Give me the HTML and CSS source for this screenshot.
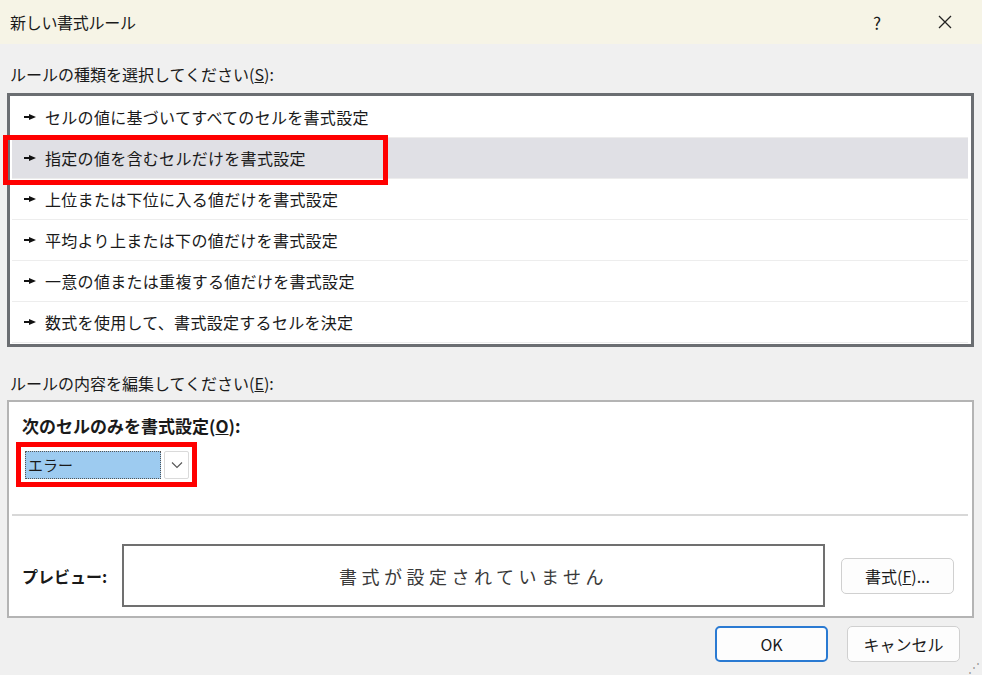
FILE: index.html
```html
<!DOCTYPE html>
<html lang="ja">
<head>
	<meta charset="UTF-8">
	<title>新しい書式ルール</title>
	<link rel="stylesheet" href="styles.css">
</head>
<body>
<div class="dialog">
	<!-- タイトルバー -->
	<div class="titlebar">
		<span class="title">新しい書式ルール</span>
		<span class="help">?</span>
		<span class="close">
			<svg width="16" height="16" viewBox="0 0 16 16"><path d="M2 2 L14 14 M14 2 L2 14" stroke="#222" stroke-width="1.3" fill="none"/></svg>
		</span>
	</div>

	<div class="content">
		<p class="label">ルールの種類を選択してください(<u>S</u>):</p>
		<div class="listbox">
			<div class="rule-row"><span class="arrow"></span>セルの値に基づいてすべてのセルを書式設定</div>
			<div class="rule-row selected"><span class="arrow"></span>指定の値を含むセルだけを書式設定<span class="mark mark-row"></span></div>
			<div class="rule-row"><span class="arrow"></span>上位または下位に入る値だけを書式設定</div>
			<div class="rule-row"><span class="arrow"></span>平均より上または下の値だけを書式設定</div>
			<div class="rule-row"><span class="arrow"></span>一意の値または重複する値だけを書式設定</div>
			<div class="rule-row"><span class="arrow"></span>数式を使用して、書式設定するセルを決定</div>
		</div>

		<p class="label label-edit">ルールの内容を編集してください(<u>E</u>):</p>
		<div class="edit-box">
			<p class="bold-label">次のセルのみを書式設定(<u>O</u>):</p>
			<div class="combo">
				<span class="combo-value">エラー</span>
				<span class="combo-btn">
					<svg width="12" height="8" viewBox="0 0 12 8"><path d="M1 1.5 L6 6.5 L11 1.5" stroke="#555" stroke-width="1.1" fill="none"/></svg>
				</span>
				<span class="mark mark-combo"></span>
			</div>
			<div class="divider"></div>
			<div class="preview-row">
				<span class="bold-label">プレビュー:</span>
				<div class="preview">書式が設定されていません</div>
				<button class="btn btn-format">書式(<u>F</u>)...</button>
			</div>
		</div>

		<div class="actions">
			<button class="btn btn-ok">OK</button>
			<button class="btn">キャンセル</button>
		</div>
	</div>
	<span class="grip">⋰</span>
</div>
</body>
</html>
```

FILE: styles.css
```css
* {
    margin: 0;
    padding: 0;
    box-sizing: border-box;
    font-family: 'Noto Sans CJK JP', 'Liberation Sans', sans-serif;
}

body {
    background: #f0f0f0;
    color: #1a1a1a;
    width: 982px;
    height: 675px;
    overflow: hidden;
}

.dialog {
    position: relative;
    height: 675px;
}

.titlebar {
    height: 44px;
    background: #f6f4e6;
    display: flex;
    align-items: center;
    padding-left: 10px;
}

.title {
    font-size: 16px;
    flex-grow: 1;
    letter-spacing: -0.3px;
}

.help {
    font-size: 17px;
    width: 70px;
    text-align: center;
    margin-right: 10px;
}

.close {
    width: 46px;
    margin-right: 14px;
    display: flex;
    justify-content: center;
}

.content {
    padding: 0 8px 0 7px;
}

.label {
    font-size: 16px;
    line-height: 20px;
    margin: 20px 0 0 3px;
}

.listbox {
    margin-top: 9px;
    width: 967px;
    height: 254px;
    background: #fff;
    border: 3px solid #6b6e72;
    padding: 1px 3px 1px 2px;
}

.rule-row {
    position: relative;
    height: 41px;
    display: flex;
    align-items: center;
    font-size: 16px;
    letter-spacing: 0.3px;
    padding-left: 12px;
    border-bottom: 1px solid #ededed;
}

.rule-row.selected {
    background: #e0e0e5;
}

.arrow {
    width: 12px;
    height: 7px;
    margin-right: 9px;
    background: linear-gradient(#111, #111) 0 50% / 6px 2px no-repeat;
    position: relative;
}

.arrow::after {
    content: '';
    position: absolute;
    right: 0;
    top: 0;
    border-left: 7px solid #111;
    border-top: 3.5px solid transparent;
    border-bottom: 3.5px solid transparent;
}

.mark {
    position: absolute;
    border: 5px solid #ff0000;
}

.mark-row {
    left: -9px;
    top: -3px;
    width: 385px;
    height: 50px;
}

.label-edit {
    margin-top: 26px;
}

.edit-box {
    margin-top: 7px;
    width: 967px;
    height: 218px;
    background: #fff;
    border: 2px solid #b4b4b4;
    padding: 13px 4px 0 13px;
}

.bold-label {
    font-size: 17px;
    font-weight: bold;
    line-height: 22px;
}

.combo {
    position: relative;
    margin-top: 11px;
    width: 170px;
    height: 34px;
    display: flex;
    padding: 3px;
    background: #fff;
}

.combo-value {
    flex-grow: 1;
    background: #9dcbf0;
    border: 1px dotted #555;
    font-size: 15px;
    line-height: 26px;
    padding-left: 2px;
}

.combo-btn {
    width: 25px;
    margin-left: 3px;
    border: 1px solid #dadada;
    border-radius: 2px;
    display: flex;
    align-items: center;
    justify-content: center;
}

.mark-combo {
    left: -6px;
    top: -6px;
    width: 181px;
    height: 45px;
}

.divider {
    height: 2px;
    background: #d8d8d8;
    margin: 32px 0 0 -10px;
}

.preview-row {
    display: flex;
    align-items: center;
    margin-top: 28px;
}

.preview-row .bold-label {
    font-size: 16px;
    width: 100px;
}

.preview {
    width: 703px;
    height: 63px;
    border: 2px solid #707070;
    display: flex;
    align-items: center;
    justify-content: center;
    font-size: 18px;
    letter-spacing: 4.5px;
    color: #3a3a3a;
}

.btn {
    background: #fdfdfd;
    border: 1px solid #d0d0d0;
    border-radius: 5px;
    font-size: 16px;
    color: #1a1a1a;
    width: 113px;
    height: 36px;
}

.btn-format {
    margin-left: 16px;
}

.actions {
    display: flex;
    justify-content: flex-end;
    gap: 19px;
    margin-top: 8px;
    padding-right: 14px;
}

.btn-ok {
    border: 2px solid #2a7ad2;
}

.grip {
    position: absolute;
    right: 2px;
    bottom: 0;
    color: #999;
    font-size: 12px;
}
```
